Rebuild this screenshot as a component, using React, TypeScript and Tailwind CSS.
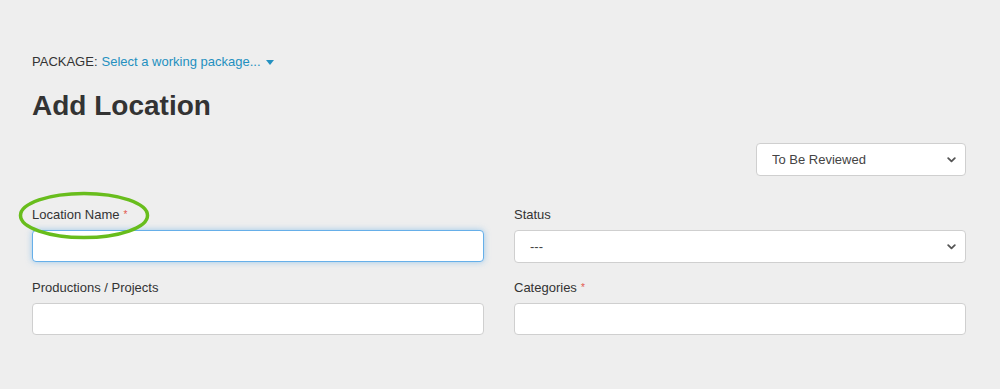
import React from "react";

const font = { fontFamily: '"Liberation Sans", Arial, sans-serif' };

function Chevron() {
  return (
    <svg
      width="9"
      height="6"
      viewBox="0 0 9 6"
      className="pointer-events-none absolute right-[10px] top-1/2 -translate-y-1/2"
    >
      <path d="M1.2 1.2 L4.5 4.4 L7.8 1.2" fill="none" stroke="#555" strokeWidth="1.8" strokeLinecap="round" strokeLinejoin="round" />
    </svg>
  );
}

function Select({ value, className = "" }: { value: string; className?: string }) {
  return (
    <div className={`relative ${className}`}>
      <select
        defaultValue={value}
        className="h-[33px] w-full appearance-none rounded-[4px] border border-[#cfcfcf] bg-white pl-[15px] text-[13px] text-[#444] outline-none"
      >
        <option>{value}</option>
      </select>
      <Chevron />
    </div>
  );
}

function Label({ text, required }: { text: string; required?: boolean }) {
  return (
    <label className="mb-[6px] block text-[13px] leading-[18px] text-[#333]">
      {text}
      {required && <span className="ml-[4px] align-top text-[10px] text-[#e2574c]">*</span>}
    </label>
  );
}

export default function App() {
  return (
    <div className="relative min-h-[389px] bg-[#eeeeee] pl-[32px] pr-[34px] pt-[53px]" style={font}>
      {/* package selector */}
      <div className="flex items-center text-[13px] leading-[18px] text-[#333]">
        <span>PACKAGE:</span>
        <span className="ml-[4px] text-[#2490c0]">Select a working package...</span>
        <span className="ml-[5px] inline-block h-0 w-0 border-x-[4px] border-t-[5px] border-x-transparent border-t-[#2490c0]" />
      </div>

      <h1 className="mt-[17px] text-[28px] font-bold leading-[36px] text-[#333]">Add Location</h1>

      <div className="mt-[19px] flex justify-end">
        <Select value="To Be Reviewed" className="w-[210px]" />
      </div>

      <div className="mt-[30px] grid grid-cols-2 gap-x-[30px] gap-y-[16px]">
        <div>
          <Label text="Location Name" required />
          <input
            type="text"
            className="block h-[32px] w-full rounded-[4px] border border-[#66afe9] bg-white shadow-[0_0_6px_rgba(102,175,233,0.6)] outline-none"
          />
        </div>
        <div>
          <Label text="Status" />
          <Select value="---" />
        </div>
        <div>
          <Label text="Productions / Projects" />
          <input type="text" className="block h-[32px] w-full rounded-[4px] border border-[#cfcfcf] bg-white outline-none" />
        </div>
        <div>
          <Label text="Categories" required />
          <input type="text" className="block h-[32px] w-full rounded-[4px] border border-[#cfcfcf] bg-white outline-none" />
        </div>
      </div>

      {/* annotation ring */}
      <svg className="pointer-events-none absolute left-0 top-0" width="200" height="260">
        <ellipse cx="84" cy="215.5" rx="63.5" ry="22" fill="none" stroke="#68bd1c" strokeWidth="3.5" />
      </svg>
    </div>
  );
}
